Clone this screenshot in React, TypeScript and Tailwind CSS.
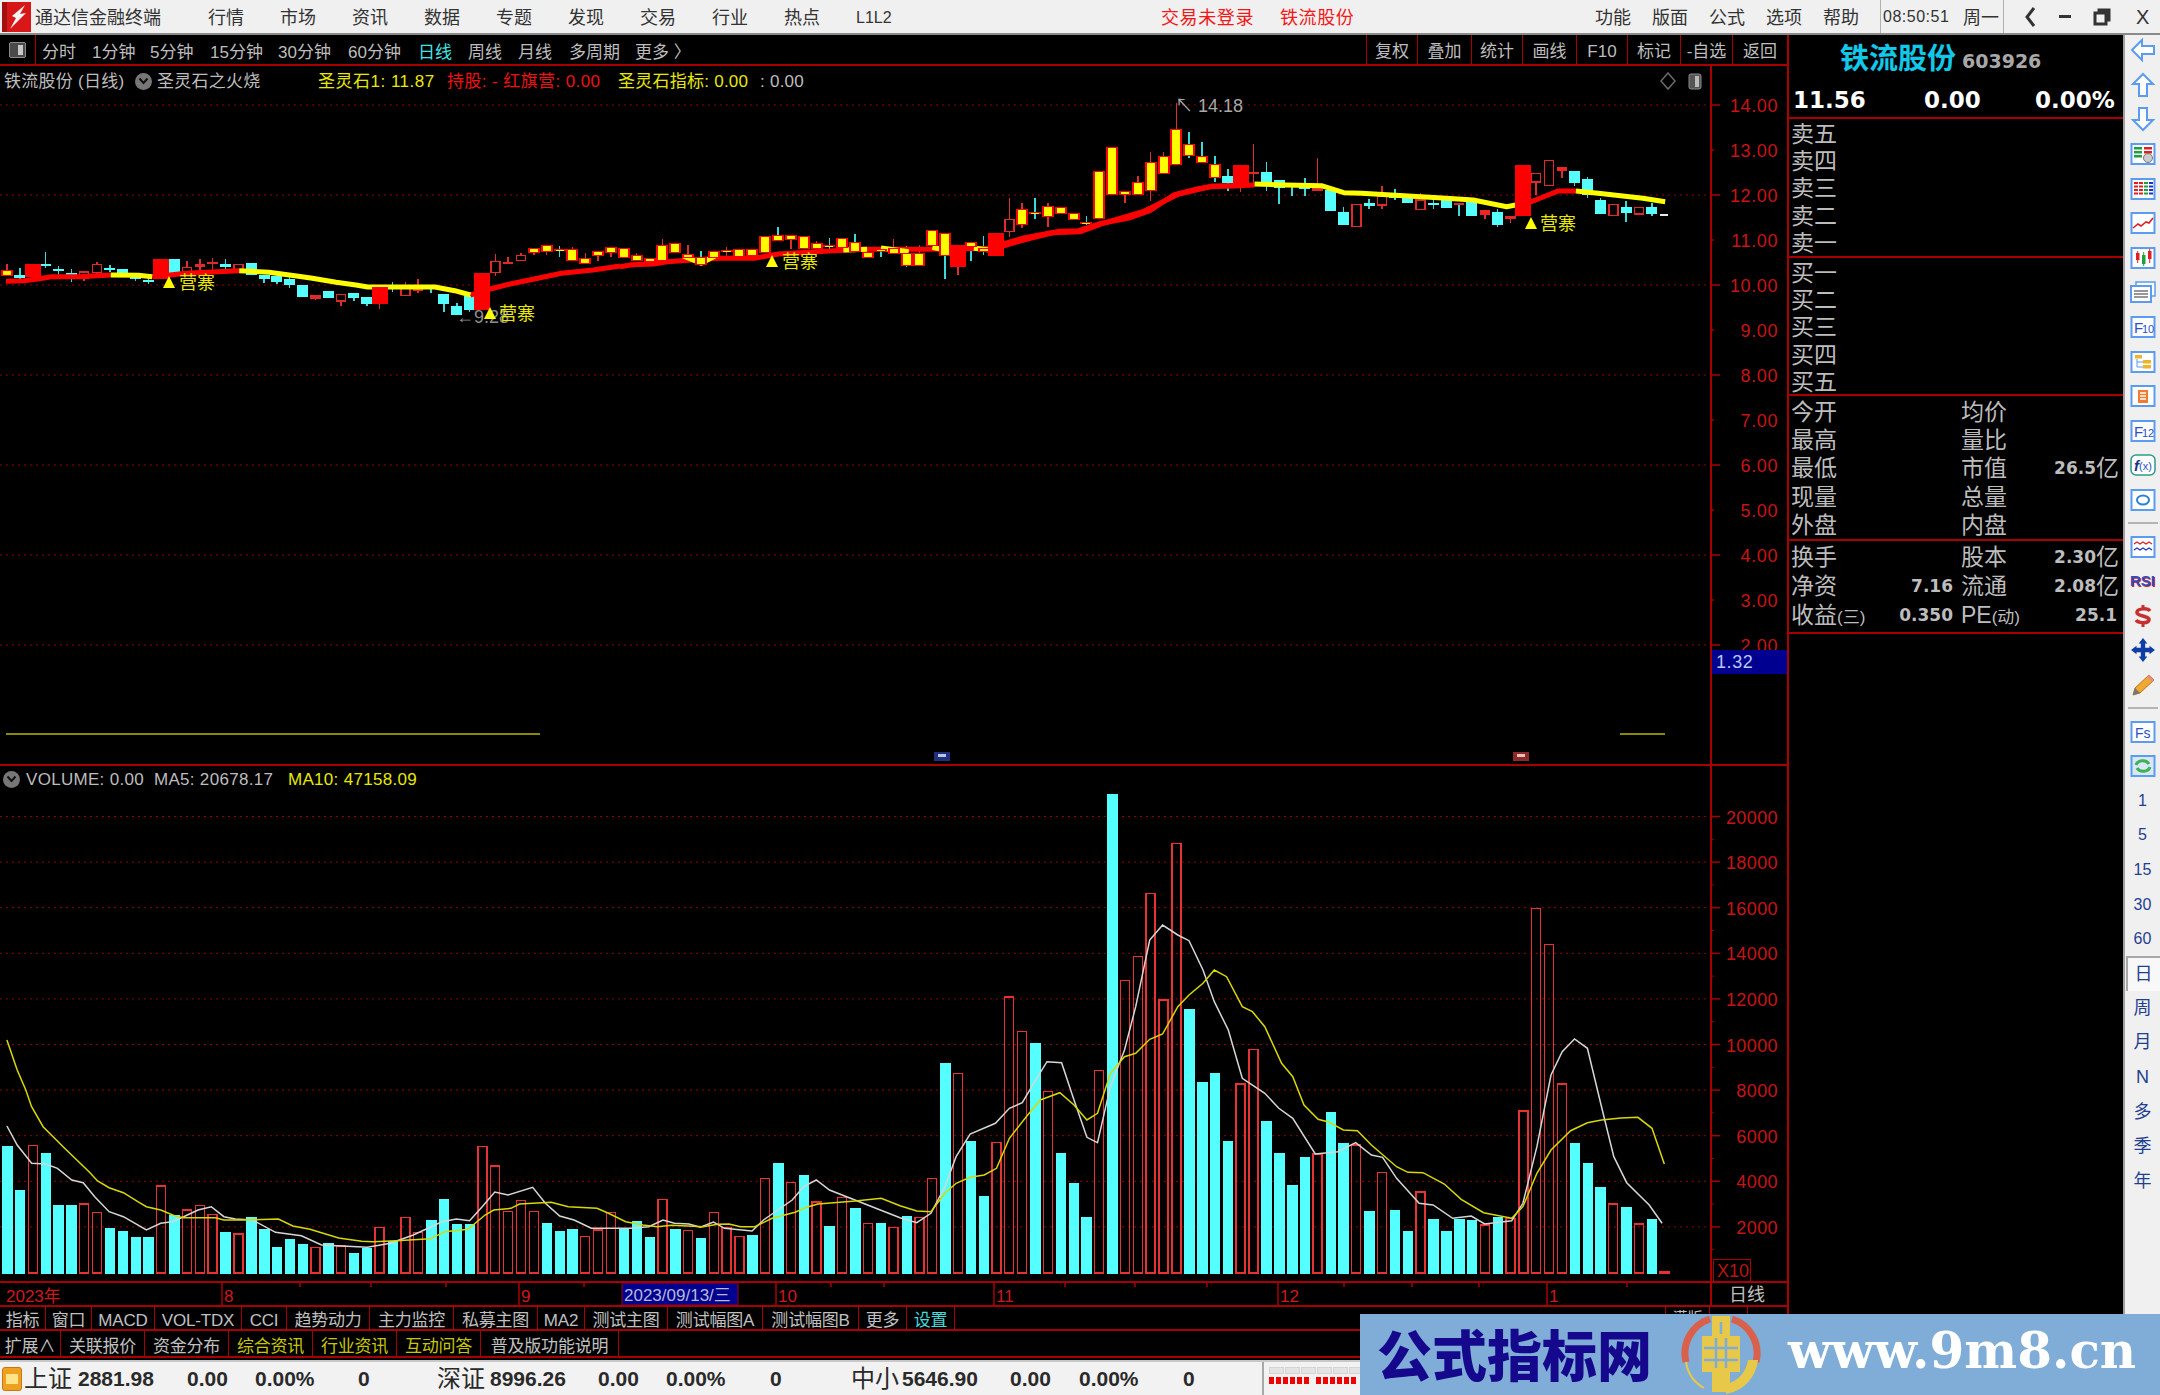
import type { ReactNode } from "react";

const RED = "#a80000";
const CY = "#55ffff";

// candle rows traced off the reference: [type, top, bottom, wickTop, wickBottom]
// types: c cyan, r hollow red, R solid red, Y yellow on red, Yc/rc same with a cyan wick
type Row = [string, number, number, number?, number?];

const rows7: Row[] = [
  ["Y", 150, 168, 132, 168], ["c", 165, 173, 145, 178], ["R", 132, 172], ["c", 133, 139, 97, 143],
  ["c", 147, 153, 137, 165], ["c", 160, 163, 147, 186], ["r", 156, 176, 156, 182], ["r", 133, 158, 127, 170],
  ["c", 143, 146, 136, 155], ["c", 147, 172], ["c", 165, 176, 165, 182], ["c", 180, 184, 172, 193],
  ["R", 118, 177], ["c", 118, 160], ["r", 143, 160, 124, 160], ["r", 133, 140, 118, 150],
  ["r", 127, 130, 114, 150], ["c", 133, 140, 118, 148], ["r", 133, 148], ["c", 128, 166],
  ["c", 164, 177, 164, 190], ["c", 168, 186, 168, 192], ["c", 178, 195, 172, 203], ["c", 196, 231],
  ["r", 228, 234, 228, 240], ["c", 214, 235], ["r", 224, 243, 224, 258], ["c", 218, 234, 218, 244],
  ["c", 232, 252, 232, 258], ["R", 201, 252, 201, 266], ["c", 198, 202, 187, 217], ["r", 206, 226, 187, 226],
  ["r", 207, 212, 178, 220], ["c", 198, 203, 198, 218], ["c", 222, 253, 222, 275], ["c", 259, 285, 250, 285],
  ["c", 228, 270, 228, 275], ["R", 160, 270], ["r", 124, 158, 101, 167], ["r", 128, 131, 110, 131],
  ["r", 106, 121, 100, 121], ["Y", 83, 100, 83, 105], ["Y", 75, 95, 75, 105], ["Yc", 88, 94, 78, 110],
  ["Y", 88, 122, 82, 122], ["Y", 115, 132, 100, 132], ["Y", 93, 109, 93, 122], ["Y", 80, 100, 80, 112],
];

const rows8: Row[] = [
  ["Y", 234, 265], ["Y", 256, 274, 250, 274], ["Y", 265, 277], ["Y", 225, 272, 207, 272],
  ["Y", 220, 250], ["Y", 252, 264, 224, 264], ["Yc", 262, 285, 242, 285], ["Y", 243, 264],
  ["Y", 240, 246, 232, 262], ["Y", 238, 260], ["Y", 238, 258], ["Y", 198, 250],
  ["Yc", 194, 214, 170, 214], ["Y", 194, 210, 194, 237], ["Y", 198, 238], ["Y", 220, 238, 212, 238],
  ["Yc", 225, 232, 203, 240], ["Y", 203, 233], ["Yc", 215, 245, 193, 245], ["Y", 245, 263],
  ["Yc", 236, 243, 236, 260], ["Y", 235, 253, 207, 253], ["Yc", 250, 287, 228, 290], ["Y", 250, 287, 225, 287],
  ["Y", 180, 228], ["Yc", 188, 258, 188, 327], ["R", 224, 290, 224, 315], ["Yc", 216, 230, 216, 272],
  ["Yc", 235, 245, 197, 255], ["R", 188, 259],
];

const rows9: Row[] = [
  ["r", 389, 425, 325, 440], ["Y", 356, 405, 340, 415], ["Yc", 365, 369, 325, 388], ["Y", 347, 382, 338, 410],
  ["Y", 351, 372], ["Y", 370, 391], ["Yc", 397, 400, 378, 405], ["Y", 243, 387],
  ["Y", 172, 316], ["Y", 302, 315, 302, 340], ["Y", 275, 315, 258, 315], ["Y", 217, 302, 185, 332],
  ["Y", 198, 252, 185, 252], ["Y", 117, 225, 40, 225], ["Yc", 162, 198, 127, 205], ["Yc", 198, 220, 157, 220],
  ["Yc", 222, 265, 197, 275], ["c", 257, 280, 238, 302], ["R", 226, 286, 226, 305], ["r", 247, 250, 163, 285],
  ["c", 247, 275, 217, 302], ["c", 270, 295, 270, 342], ["c", 280, 290, 280, 318], ["c", 288, 296, 265, 318],
  ["r", 294, 300, 203, 300], ["c", 300, 364], ["c", 365, 405, 350, 405], ["r", 343, 410],
  ["c", 338, 348, 328, 358], ["r", 320, 345, 288, 358], ["c", 312, 325, 297, 330], ["c", 320, 338],
  ["r", 330, 358, 308, 358], ["c", 338, 343, 318, 358], ["c", 330, 355], ["rc", 340, 344, 340, 378],
  ["c", 328, 378], ["r", 362, 372, 362, 388], ["c", 365, 405, 357, 410], ["r", 380, 385, 380, 400],
  ["R", 226, 378], ["r", 250, 276, 250, 315], ["r", 212, 287], ["r", 232, 242, 232, 265],
  ["c", 244, 278, 244, 288], ["c", 267, 315, 262, 325], ["c", 330, 373, 325, 373], ["r", 344, 377],
  ["c", 352, 368, 334, 395], ["r", 353, 372], ["c", 352, 373, 340, 378],
];

type Candle = { i: number; t: string; a: number; b: number; w1: number; w2: number };
const toCandles = (list: Row[], start: number, base: number): Candle[] =>
  list.map(([t, a, b, w1, w2], n) => ({
    i: start + n,
    t,
    a: base + a / 3,
    b: base + b / 3,
    w1: base + (w1 ?? a) / 3,
    w2: base + (w2 ?? b) / 3,
  }));

const candles = [...toCandles(rows7, 0, 220), ...toCandles(rows8, 48, 170), ...toCandles(rows9, 78, 90)];
const barX = (i: number) => 7 + 12.85 * i;

// thick signal line, [x, y] in 3x zoom units of each crop
const pts = (p: number[][], ox: number, sx: number, oy: number) =>
  p.map(([x, y]) => `${(ox + x / sx).toFixed(1)},${(oy + y / 3).toFixed(1)}`).join(" ");

const redLines = [
  pts([[15, 184], [60, 182], [100, 176], [130, 170], [200, 170], [280, 165]], 0, 2.529, 220),
  pts([[385, 170], [430, 165], [470, 160], [550, 155], [605, 152]], 0, 2.529, 220),
  pts([[1190, 225], [1240, 207], [1290, 192], [1360, 175], [1420, 160], [1500, 150], [1568, 138]], 0, 2.529, 220),
  pts([[0, 290], [30, 284], [85, 282], [120, 275], [155, 272], [250, 265], [340, 265], [400, 252], [540, 242], [620, 238], [770, 238], [950, 235], [985, 222], [1040, 204], [1110, 184], [1160, 182], [1210, 162], [1290, 143], [1340, 122], [1400, 75], [1460, 57], [1500, 48], [1568, 47]], 620, 2.529, 170),
  pts([[0, 465], [50, 445], [115, 428], [180, 425], [230, 400], [320, 365], [400, 312], [470, 290], [570, 285]], 1000, 2.24, 90),
  pts([[1155, 345], [1190, 335], [1250, 303], [1290, 303]], 1000, 2.24, 90),
];

const yellowLines = [
  pts([[280, 165], [350, 166], [385, 170]], 0, 2.529, 220),
  pts([[605, 152], [680, 157], [750, 168], [790, 175], [850, 187], [900, 195], [930, 201], [1100, 201], [1150, 212], [1190, 225]], 0, 2.529, 220),
  pts([[160, 258], [205, 280], [240, 258]], 620, 2.529, 170),
  pts([[565, 240], [625, 238]], 620, 2.529, 170),
  pts([[660, 234], [730, 245]], 620, 2.529, 170),
  pts([[790, 232], [830, 242]], 620, 2.529, 170),
  pts([[895, 235], [935, 240]], 620, 2.529, 170),
  pts([[570, 282], [640, 285], [720, 287], [770, 308], [810, 310], [1000, 325], [1060, 330], [1135, 350], [1155, 345]], 1000, 2.24, 90),
  pts([[1290, 303], [1340, 310], [1440, 325], [1490, 335]], 1000, 2.24, 90),
];

// volume bars, tops in 3x crop units
const vol10: [string, number][] = [
  ["c", 438], ["c", 570], ["r", 436], ["c", 458], ["c", 615], ["c", 615], ["r", 612], ["r", 638], ["c", 683], ["c", 692],
  ["c", 710], ["c", 710], ["r", 558], ["c", 645], ["r", 630], ["r", 617], ["r", 643], ["c", 696], ["r", 702], ["c", 652],
  ["c", 688], ["c", 741], ["c", 718], ["c", 732], ["r", 742], ["c", 728], ["r", 738], ["c", 759], ["c", 744], ["r", 683],
  ["c", 723], ["r", 652], ["r", 697], ["c", 660], ["c", 597], ["c", 673], ["c", 673], ["r", 440], ["r", 498], ["r", 634],
  ["r", 602], ["r", 634], ["c", 669], ["c", 692], ["c", 687], ["r", 710], ["r", 690], ["r", 638], ["c", 683], ["c", 664],
  ["c", 710], ["r", 598], ["c", 687], ["r", 692], ["c", 714], ["r", 638], ["r", 683], ["r", 710], ["c", 705], ["r", 535],
  ["c", 489], ["r", 548], ["c", 525], ["r", 606], ["c", 678], ["r", 592], ["c", 624], ["r", 670], ["c", 669], ["r", 683],
];
const vol11: [string, number][] = [
  ["c", 1307], ["r", 1313], ["r", 1196], ["c", 848], ["r", 881], ["c", 1082], ["c", 1248], ["r", 1087], ["r", 651], ["r", 755],
  ["c", 790], ["r", 934], ["c", 1118], ["c", 1208], ["c", 1311], ["r", 871], ["c", 41], ["r", 601], ["r", 529], ["r", 340],
  ["r", 660], ["r", 191], ["c", 686], ["c", 906], ["c", 879], ["c", 1082], ["r", 912], ["r", 808], ["c", 1023], ["c", 1118],
  ["c", 1216], ["c", 1131], ["r", 1122], ["c", 996], ["c", 1090], ["r", 1095], ["c", 1294], ["r", 1178], ["c", 1289], ["c", 1352],
  ["r", 1236], ["c", 1316], ["c", 1352], ["c", 1316], ["c", 1320], ["r", 1335], ["c", 1312], ["r", 1316], ["r", 993], ["r", 385],
  ["r", 493], ["r", 912], ["c", 1090], ["c", 1150], ["c", 1222], ["r", 1272], ["c", 1280], ["r", 1332], ["c", 1316], ["r", 1476],
];
const volBars = [
  ...vol10.map(([t, y], i) => ({ i, t, y: 1000 + y / 3 })),
  ...vol11.map(([t, y], n) => ({ i: 70 + n, t, y: 780 + y / 3 })),
];

const whiteLine =
  pts([[12, 378], [30, 435], [55, 490], [80, 492], [100, 505], [125, 540], [145, 548], [165, 590], [190, 635], [215, 650], [255, 690], [280, 670], [300, 665], [320, 650], [345, 630], [368, 620], [390, 650], [410, 657], [440, 660], [480, 697], [525, 707], [560, 735], [640, 742], [680, 730], [720, 705], [770, 665], [795, 657], [818, 662], [840, 620], [862, 576], [885, 585], [928, 562], [950, 610], [975, 648], [1000, 660], [1030, 685], [1100, 685], [1130, 680], [1155, 660], [1175, 670], [1200, 672], [1220, 682], [1243, 666], [1262, 685], [1310, 693], [1330, 660], [1380, 600], [1400, 560], [1422, 540], [1445, 570]], 0, 1.742, 1000) +
  " " +
  pts([[0, 1313], [30, 1328], [55, 1300], [80, 1220], [100, 1130], [125, 1062], [170, 1030], [195, 985], [218, 968], [240, 905], [262, 845], [288, 848], [310, 960], [333, 1072], [352, 1088], [375, 920], [400, 810], [420, 680], [445, 480], [468, 435], [495, 465], [515, 482], [540, 570], [560, 665], [585, 750], [610, 895], [650, 940], [675, 985], [700, 1015], [740, 1122], [780, 1115], [812, 1088], [840, 1125], [860, 1132], [885, 1195], [925, 1270], [950, 1275], [985, 1315], [1018, 1308], [1042, 1332], [1090, 1322], [1110, 1270], [1135, 1100], [1160, 885], [1180, 815], [1202, 777], [1225, 805], [1250, 980], [1272, 1130], [1295, 1208], [1335, 1275], [1358, 1330]], 900, 1.782, 780);

const yellowVol =
  pts([[12, 120], [30, 210], [45, 270], [55, 320], [75, 380], [110, 440], [155, 515], [170, 543], [190, 563], [215, 578], [240, 605], [255, 620], [280, 630], [305, 648], [320, 653], [375, 653], [390, 660], [420, 660], [485, 657], [510, 678], [540, 688], [590, 714], [630, 724], [650, 725], [690, 722], [750, 716], [775, 695], [815, 688], [845, 645], [860, 630], [890, 625], [905, 612], [960, 607], [990, 620], [1040, 625], [1060, 640], [1090, 665], [1120, 675], [1145, 680], [1170, 676], [1225, 680], [1250, 673], [1270, 672], [1290, 680], [1315, 680], [1345, 655], [1385, 637], [1405, 622], [1425, 612], [1490, 603], [1535, 595]], 0, 1.742, 1000) +
  " " +
  pts([[0, 1277], [30, 1293], [55, 1295], [80, 1240], [100, 1210], [125, 1192], [150, 1185], [172, 1165], [195, 1075], [225, 1010], [250, 960], [285, 938], [310, 975], [333, 1020], [352, 1000], [375, 880], [400, 830], [420, 820], [445, 778], [468, 762], [495, 680], [515, 645], [540, 610], [560, 570], [582, 590], [610, 680], [628, 695], [650, 740], [680, 850], [700, 890], [720, 975], [745, 1018], [765, 1027], [790, 1050], [815, 1052], [840, 1095], [885, 1160], [905, 1177], [932, 1178], [970, 1212], [1000, 1258], [1040, 1298], [1090, 1315], [1110, 1280], [1135, 1180], [1160, 1110], [1195, 1052], [1225, 1028], [1250, 1020], [1285, 1014], [1315, 1012], [1340, 1045], [1362, 1152]], 900, 1.782, 780);

const PriceChart = () => {
  const y = (p: number) => 105 + (14 - p) * 45;
  const prices = [14, 13, 12, 11, 10, 9, 8, 7, 6, 5, 4, 3, 2];
  const marks: [number, number, number][] = [
    [169, 283, 179],
    [490, 314, 499],
    [772, 262, 782],
    [1531, 224, 1540],
  ];
  const low = candles.filter((c) => !c.t.startsWith("Y") && c.t !== "R");
  const high = candles.filter((c) => c.t.startsWith("Y") || c.t === "R");
  return (
    <svg width={1787} height={698} viewBox="0 66 1787 698" className="block">
      {prices.map((p) => (
        <g key={p}>
          {p % 2 === 0 && <line x1={0} x2={1710} y1={y(p)} y2={y(p)} stroke="#900000" strokeDasharray="2 4" />}
          <line x1={1710} x2={p % 2 === 0 ? 1720 : 1714} y1={y(p)} y2={y(p)} stroke={RED} strokeWidth={1.5} />
          <text x={1778} y={y(p) + 7} textAnchor="end" fontSize={18} letterSpacing={0.6} fill="#c81414">
            {p.toFixed(2)}
          </text>
        </g>
      ))}
      <line x1={1711} x2={1711} y1={66} y2={764} stroke={RED} strokeWidth={2} />
      <rect x={1712} y={650} width={75} height={24} fill="#000090" />
      <text x={1716} y={668} fontSize={18} letterSpacing={0.6} fill="#b9c8f5">1.32</text>

      <polygon points="1668,73 1675,81 1668,89 1661,81" fill="none" stroke="#6a6a6a" strokeWidth={1.5} />
      <rect x={1689} y={74} width={12} height={15} rx={2} fill="#555" stroke="#8a8a8a" />
      <rect x={1695} y={76} width={4} height={11} fill="#bbb" />

      {/* wicks and plain bodies go under the signal line */}
      <g shapeRendering="crispEdges">
        {candles.map((c) => (
          <line
            key={c.i}
            x1={barX(c.i)}
            x2={barX(c.i)}
            y1={c.w1}
            y2={c.w2}
            stroke={c.t === "c" || c.t === "Yc" || c.t === "rc" ? "#3fd8d8" : "#d83030"}
            strokeWidth={1.5}
          />
        ))}
        {low.map((c) =>
          c.t === "c" ? (
            <rect key={c.i} x={barX(c.i) - 5.5} y={c.a} width={11} height={Math.max(c.b - c.a, 2)} fill={CY} />
          ) : (
            <rect
              key={c.i}
              x={barX(c.i) - 4.5}
              y={c.a}
              width={9}
              height={c.b - c.a}
              fill={c.b - c.a < 4 ? "#ff2020" : "#000"}
              stroke="#e02a2a"
              strokeWidth={1.5}
            />
          ),
        )}
      </g>
      {redLines.map((p, n) => (
        <polyline key={n} points={p} fill="none" stroke="#ff0000" strokeWidth={5} strokeLinejoin="round" />
      ))}
      {yellowLines.map((p, n) => (
        <polyline key={n} points={p} fill="none" stroke="#ffff00" strokeWidth={5} strokeLinejoin="round" />
      ))}
      <g shapeRendering="crispEdges">
        {high.map((c) =>
          c.t === "R" ? (
            <rect key={c.i} x={barX(c.i) - 8} y={c.a} width={16} height={c.b - c.a} fill="#ff0000" />
          ) : (
            <g key={c.i}>
              <rect x={barX(c.i) - 6} y={c.a} width={12} height={Math.max(c.b - c.a, 2)} fill="#ff0000" />
              <rect x={barX(c.i) - 4} y={c.a + 1} width={8} height={Math.max(c.b - c.a - 2, 1)} fill="#ffff00" />
            </g>
          ),
        )}
      </g>
      <rect x={1660} y={214} width={8} height={2} fill="#e8e8e8" />

      <text x={456} y={323} fontSize={18} fill="#8f8f8f">←9.28</text>
      <text x={1175} y={112} fontSize={18} fill="#a8a8a8">↖</text>
      <text x={1198} y={112} fontSize={18} fill="#a8a8a8">14.18</text>
      {marks.map(([tx, ty, lx]) => (
        <g key={tx}>
          <polygon points={`${tx},${ty - 7} ${tx + 6},${ty + 5} ${tx - 6},${ty + 5}`} fill="#ffff00" />
          <text x={lx} y={ty + 6} fontSize={18} fill="#e8e800">营寨</text>
        </g>
      ))}

      <line x1={6} x2={540} y1={734} y2={734} stroke="#b8b800" strokeWidth={1.5} />
      <line x1={1620} x2={1665} y1={734} y2={734} stroke="#b8b800" strokeWidth={1.5} />
      <rect x={934} y={752} width={16} height={9} fill="#20307c" />
      <rect x={938} y={754} width={8} height={3} fill="#b8c4e0" />
      <rect x={1513} y={752} width={16} height={9} fill="#8c2a2a" />
      <rect x={1517} y={754} width={8} height={3} fill="#e8c0c0" />
    </svg>
  );
};

const VolumeChart = () => {
  const y = (v: number) => 1272.5 - (v / 2000) * 45.6;
  const levels = [2000, 4000, 6000, 8000, 10000, 12000, 14000, 16000, 18000, 20000];
  return (
    <svg width={1787} height={515} viewBox="0 766 1787 515" className="block">
      {levels.map((v) => (
        <g key={v}>
          <line x1={0} x2={1710} y1={y(v)} y2={y(v)} stroke="#900000" strokeDasharray="2 4" />
          <line x1={1710} x2={1720} y1={y(v)} y2={y(v)} stroke={RED} strokeWidth={1.5} />
          <line x1={1710} x2={1714} y1={y(v - 1000)} y2={y(v - 1000)} stroke={RED} />
          <text x={1778} y={y(v) + 7} textAnchor="end" fontSize={18} letterSpacing={0.4} fill="#c81414">
            {v}
          </text>
        </g>
      ))}
      <line x1={1711} x2={1711} y1={766} y2={1281} stroke={RED} strokeWidth={2} />
      <rect x={1713.5} y={1259.5} width={37} height={22} fill="none" stroke={RED} />
      <text x={1717} y={1277} fontSize={18} fill="#b81414">X10</text>
      <g shapeRendering="crispEdges">
        {volBars.map((b) =>
          b.t === "c" ? (
            <rect key={b.i} x={barX(b.i) - 5} y={b.y} width={10.5} height={1273.5 - b.y} fill={CY} />
          ) : (
            <rect key={b.i} x={barX(b.i) - 4.5} y={b.y} width={9} height={1273 - b.y} fill="none" stroke="#e63232" strokeWidth={1.4} />
          ),
        )}
      </g>
      <polyline points={whiteLine} fill="none" stroke="#d6d6d6" strokeWidth={1.5} />
      <polyline points={yellowVol} fill="none" stroke="#d8d800" strokeWidth={1.5} />
    </svg>
  );
};

const DateAxis = () => {
  const seps: [number, string][] = [[222, "8"], [519, "9"], [776, "10"], [994, "11"], [1278, "12"], [1547, "1"]];
  const ticks = [300, 371, 446, 584, 831, 884, 1065, 1135, 1207, 1344, 1412, 1479, 1627];
  return (
    <svg width={1787} height={22} viewBox="0 1283 1787 22" className="block">
      <text x={6} y={1302} fontSize={17} fill="#d01818">2023年</text>
      {seps.map(([x, t]) => (
        <g key={x}>
          <line x1={x} x2={x} y1={1283} y2={1305} stroke={RED} strokeWidth={1.5} />
          <text x={x + 2} y={1302} fontSize={17} fill="#d01818">{t}</text>
        </g>
      ))}
      {ticks.map((x) => (
        <line key={x} x1={x} x2={x} y1={1283} y2={1287} stroke={RED} strokeWidth={1.5} />
      ))}
      <rect x={622} y={1283} width={116} height={22} fill="#000090" stroke={RED} />
      <text x={624} y={1301} fontSize={17} fill="#b8b8d8">2023/09/13/三</text>
      <line x1={1711} x2={1711} y1={1283} y2={1305} stroke={RED} strokeWidth={2} />
      <text x={1729} y={1301} fontSize={18} fill="#c0c0c0">日线</text>
    </svg>
  );
};

const tabs1 = [
  { label: "指标", w: "w-[46px] text-[#c0c0c0]" },
  { label: "窗口", w: "w-[46px] text-[#c0c0c0]" },
  { label: "MACD", w: "w-[63px] text-[#c0c0c0]" },
  { label: "VOL-TDX", w: "w-[87px] text-[#c0c0c0]" },
  { label: "CCI", w: "w-[45px] text-[#c0c0c0]" },
  { label: "趋势动力", w: "w-[83px] text-[#c0c0c0]" },
  { label: "主力监控", w: "w-[84px] text-[#c0c0c0]" },
  { label: "私募主图", w: "w-[84px] text-[#c0c0c0]" },
  { label: "MA2", w: "w-[47px] text-[#c0c0c0]" },
  { label: "测试主图", w: "w-[83px] text-[#c0c0c0]" },
  { label: "测试幅图A", w: "w-[95px] text-[#c0c0c0]" },
  { label: "测试幅图B", w: "w-[96px] text-[#c0c0c0]" },
  { label: "更多", w: "w-[48px] text-[#c0c0c0]" },
  { label: "设置", w: "w-[48px] text-[#44dcdc]" },
];

const tabs2 = [
  { label: "扩展∧", w: "w-[61px] text-[#c0c0c0]" },
  { label: "关联报价", w: "w-[84px] text-[#c0c0c0]" },
  { label: "资金分布", w: "w-[84px] text-[#c0c0c0]" },
  { label: "综合资讯", w: "w-[84px] text-[#c8c800]" },
  { label: "行业资讯", w: "w-[84px] text-[#c8c800]" },
  { label: "互动问答", w: "w-[84px] text-[#c8c800]" },
  { label: "普及版功能说明", w: "w-[138px] text-[#c0c0c0]" },
];

const TabCell = ({ label, w }: { label: string; w: string }) => (
  <div className={`${w} flex items-center justify-center pt-[5px] border-r border-[#a80000] whitespace-nowrap text-[17px] tracking-[-0.2px] leading-none`}>
    {label}
  </div>
);

const QuoteRow = ({ a, v, b, w }: { a: ReactNode; v?: string; b?: ReactNode; w?: ReactNode }) => (
  <div className="grid grid-cols-[90px_72px_82px_84px] h-[28px] items-center pl-[2px] text-[23px] leading-none text-[#bdbdbd]">
    <span className="whitespace-nowrap">{a}</span>
    <span className="text-right text-[17px] font-bold [font-family:'DejaVu_Sans',sans-serif]">{v}</span>
    <span className="pl-[8px] whitespace-nowrap">{b}</span>
    <span className="text-right">{w}</span>
  </div>
);

const Yi = ({ n }: { n: string }) => (
  <span className="flex items-center justify-end">
    <span className="text-[17px] font-bold [font-family:'DejaVu_Sans',sans-serif]">{n}</span>亿
  </span>
);

const QuotePanel = () => (
  <div className="w-[336px] border-l-2 border-[#a80000] bg-black">
    <div className="h-[48px] flex items-center pl-[51px] gap-[6px]">
      <span className="text-[29px] font-bold text-[#12c8e8] leading-none">铁流股份</span>
      <span className="mt-[4px] text-[19px] font-bold text-[#a8a8a8] [font-family:'DejaVu_Sans',sans-serif]">603926</span>
    </div>
    <div className="h-[36px] border-b-2 border-[#a80000] flex items-center text-[23px] font-bold text-white [font-family:'DejaVu_Sans',sans-serif] leading-none">
      <span className="w-[135px] pl-[4px]">11.56</span>
      <span className="w-[111px]">0.00</span>
      <span>0.00%</span>
    </div>
    <div className="h-[139px] border-b-2 border-[#a80000] pt-[2px] pl-[2px] text-[23px] leading-[27.2px] text-[#bdbdbd]">
      {["卖五", "卖四", "卖三", "卖二", "卖一"].map((t) => (
        <div key={t}>{t}</div>
      ))}
    </div>
    <div className="h-[138px] border-b-2 border-[#a80000] pt-[2px] pl-[2px] text-[23px] leading-[27.2px] text-[#bdbdbd]">
      {["买一", "买二", "买三", "买四", "买五"].map((t) => (
        <div key={t}>{t}</div>
      ))}
    </div>
    <div className="h-[145px] border-b-2 border-[#a80000] pt-[2px] [&>div]:h-[28.4px]">
      <QuoteRow a="今开" b="均价" />
      <QuoteRow a="最高" b="量比" />
      <QuoteRow a="最低" b="市值" w={<Yi n="26.5" />} />
      <QuoteRow a="现量" b="总量" />
      <QuoteRow a="外盘" b="内盘" />
    </div>
    <div className="h-[93px] border-b-2 border-[#a80000] pt-[2px] [&>div]:h-[29px]">
      <QuoteRow a="换手" b="股本" w={<Yi n="2.30" />} />
      <QuoteRow a="净资" v="7.16" b="流通" w={<Yi n="2.08" />} />
      <QuoteRow
        a={<>收益<span className="text-[17px]">(三)</span></>}
        v="0.350"
        b={<>PE<span className="text-[17px]">(动)</span></>}
        w={<span className="block pr-[2px] text-[17px] font-bold [font-family:'DejaVu_Sans',sans-serif]">25.1</span>}
      />
    </div>
  </div>
);

const Box = ({ children }: { children: ReactNode }) => (
  <svg width="26" height="24" viewBox="0 0 26 24">
    <rect x="1.5" y="2" width="23" height="20" fill="#fff" stroke="#5b9bf0" strokeWidth="2" />
    {children}
  </svg>
);

const Arrow = ({ rotate }: { rotate: number }) => (
  <svg width="26" height="26" viewBox="0 0 26 26">
    <polygon
      points="2,13 12,3 12,9 24,9 24,17 12,17 12,23"
      fill="#fff"
      stroke="#5b9bf0"
      strokeWidth="2"
      transform={`rotate(${rotate} 13 13)`}
    />
  </svg>
);

const sideTop: ReactNode[] = [
  <Arrow rotate={0} />,
  <Arrow rotate={90} />,
  <Arrow rotate={-90} />,
  <Box>
    <rect x="4" y="5" width="8" height="2.5" fill="#1fa03c" />
    <rect x="14" y="5" width="8" height="2.5" fill="#e02020" />
    <rect x="4" y="9" width="8" height="2.5" fill="#1fa03c" />
    <rect x="14" y="9" width="8" height="2.5" fill="#e02020" />
    <rect x="4" y="13" width="8" height="2.5" fill="#1fa03c" />
    <circle cx="18" cy="16" r="4.5" fill="#ccc" stroke="#777" />
  </Box>,
  <Box>
    {[5, 10, 15, 20].map((x, n) => (
      <g key={x} fill={["#e02020", "#e02020", "#1fa03c", "#2030d0"][n]}>
        <rect x={x - 1} y="5" width="4" height="2" />
        <rect x={x - 1} y="8.5" width="4" height="2" />
        <rect x={x - 1} y="12" width="4" height="2" />
        <rect x={x - 1} y="15.5" width="4" height="2" />
      </g>
    ))}
  </Box>,
  <Box>
    <polyline points="3,17 8,13 11,15 16,11 19,12 23,7" fill="none" stroke="#e02020" strokeWidth="1.6" />
  </Box>,
  <Box>
    <rect x="6" y="7" width="3.5" height="7" fill="#e02020" />
    <line x1="7.7" x2="7.7" y1="5" y2="17" stroke="#e02020" />
    <rect x="12" y="9" width="3.5" height="9" fill="#1fa03c" />
    <line x1="13.7" x2="13.7" y1="6" y2="20" stroke="#1fa03c" />
    <rect x="18" y="5" width="3.5" height="8" fill="#e02020" />
    <line x1="19.7" x2="19.7" y1="3" y2="17" stroke="#e02020" />
  </Box>,
  <svg width="26" height="24" viewBox="0 0 26 24">
    <rect x="6" y="2" width="19" height="14" fill="#fff" stroke="#5b9bf0" strokeWidth="1.5" />
    <rect x="1" y="6" width="20" height="16" fill="#fff" stroke="#5b9bf0" strokeWidth="2" />
    <path d="M4 11h14M4 14h14M4 17h14" stroke="#777" strokeWidth="1.4" />
  </svg>,
  <Box>
    <text x="4" y="18" fontSize="15" fill="#2b50c8">F</text>
    <text x="12" y="18" fontSize="11" fill="#2b50c8">10</text>
  </Box>,
  <Box>
    <rect x="5" y="5" width="7" height="3.5" fill="#f0b428" />
    <rect x="13" y="10" width="8" height="3.5" fill="#f0b428" />
    <rect x="13" y="15" width="8" height="3.5" fill="#f0b428" />
    <path d="M7 9v8h6M7 12h6" stroke="#5b9bf0" fill="none" />
  </Box>,
  <Box>
    <rect x="8" y="6" width="10" height="13" fill="#f47a30" />
    <path d="M10 9h6M10 12h6M10 15h6" stroke="#fff" strokeWidth="1.5" />
  </Box>,
  <Box>
    <text x="4" y="18" fontSize="15" fill="#2b50c8">F</text>
    <text x="12" y="18" fontSize="11" fill="#2b50c8">12</text>
  </Box>,
  <svg width="26" height="24" viewBox="0 0 26 24">
    <rect x="1" y="2" width="24" height="20" rx="5" fill="#fff" stroke="#2e9a8c" strokeWidth="1.5" />
    <text x="4" y="18" fontSize="15" fontStyle="italic" fontWeight="bold" fill="#20308c">f</text>
    <text x="9" y="17" fontSize="11" fill="#2b50c8">(x)</text>
  </svg>,
  <Box>
    <ellipse cx="13" cy="12" rx="6" ry="4.5" fill="none" stroke="#2b80d8" strokeWidth="2" />
  </Box>,
];

const sideMid: ReactNode[] = [
  <Box>
    <path d="M4 9l3-2 3 2 3-2 3 2 3-2 3 2" fill="none" stroke="#e02020" strokeWidth="1.2" />
    <path d="M4 15l3-2 3 2 3-2 3 2 3-2 3 2" fill="none" stroke="#2030d0" strokeWidth="1.2" />
  </Box>,
  <span className="text-[15px] font-bold text-[#3a48b8] [font-family:'Liberation_Sans',sans-serif] [text-shadow:1px_1px_0_#c03030]">RSI</span>,
  <svg width="22" height="26" viewBox="0 0 22 26">
    <path d="M11 2v4M11 20v4" stroke="#c83030" strokeWidth="3" />
    <path d="M18 8c-2-3-12-3-13 1s13 4 12 8-11 3-13 0" fill="none" stroke="#c83030" strokeWidth="3.5" />
  </svg>,
  <svg width="26" height="26" viewBox="0 0 24 24" fill="#0d3ea8">
    <polygon points="12,1 16,6 14,6 14,10 18,10 18,8 23,12 18,16 18,14 14,14 14,18 16,18 12,23 8,18 10,18 10,14 6,14 6,16 1,12 6,8 6,10 10,10 10,6 8,6" />
  </svg>,
  <svg width="26" height="26" viewBox="0 0 26 26">
    <polygon points="3,23 5,16 19,3 24,8 10,21" fill="#f0a830" stroke="#b87818" />
    <polygon points="19,3 24,8 22,10 17,5" fill="#e88a8a" />
    <polygon points="3,23 5,16 10,21" fill="#777" />
  </svg>,
];

const Sep = () => (
  <div className="h-[12px] flex items-center justify-center">
    <div className="w-[30px] h-[2px] bg-[#b4b4b4]" />
  </div>
);

const SideBar = () => (
  <div className="w-[37px] bg-[#f0f0f0] border-l-2 border-[#a0a0a0]">
    <div className="-mt-[2px] flex flex-col items-center text-[#1f3f8f] text-[15px]">
      {sideTop.map((n, k) => (
        <div key={k} className="h-[34.6px] flex items-center justify-center">{n}</div>
      ))}
      <Sep />
      {sideMid.map((n, k) => (
        <div key={k} className="h-[34.6px] flex items-center justify-center">{n}</div>
      ))}
      <Sep />
      <div className="h-[34.6px] flex items-center justify-center">
        <svg width="26" height="24" viewBox="0 0 26 24">
          <rect x="1.5" y="2" width="23" height="20" fill="#fff" stroke="#5b9bf0" strokeWidth="2" />
          <text x="5" y="18" fontSize="14" fill="#2b50c8">Fs</text>
        </svg>
      </div>
      <div className="h-[34.6px] flex items-center justify-center">
        <svg width="26" height="24" viewBox="0 0 26 24">
          <rect x="1.5" y="2" width="23" height="20" fill="#d8e8f8" stroke="#5b9bf0" strokeWidth="2" />
          <path d="M6 11a7 6 0 0 1 13-1M20 13a7 6 0 0 1-13 1" fill="none" stroke="#40b050" strokeWidth="3" />
        </svg>
      </div>
      {["1", "5", "15", "30", "60"].map((t) => (
        <div key={t} className="h-[34.6px] flex items-center justify-center [font-family:'Liberation_Sans',sans-serif] text-[16px]">{t}</div>
      ))}
      <div className="h-[34.6px] w-[34px] flex items-center justify-center text-[18px] bg-[#f8f8f8] border-t-2 border-l-2 border-[#a8a8a8]">日</div>
      {["周", "月", "N", "多", "季", "年"].map((t) => (
        <div key={t} className="h-[34.6px] flex items-center justify-center text-[18px]">{t}</div>
      ))}
    </div>
  </div>
);

const TitleBar = () => (
  <div className="h-[35px] bg-[#f0f0f0] border-b-2 border-[#8a8a8a] flex items-center text-[18px] text-[#333] leading-none">
    <div className="w-[35px] pl-[2px]">
      <svg width="29" height="30" viewBox="0 0 29 30">
        <rect width="29" height="30" fill="#d81818" />
        <rect width="5" height="30" fill="#a01010" />
        <path d="M23 3 L10 14 L14 16 L8 27 L24 11 L18 12 Z" fill="#f4f4f4" />
      </svg>
    </div>
    <div className="w-[173px] pt-[2px] whitespace-nowrap">通达信金融终端</div>
    {["行情", "市场", "资讯", "数据", "专题", "发现", "交易", "行业", "热点"].map((t) => (
      <div key={t} className="w-[72px] pt-[2px]">{t}</div>
    ))}
    <div className="w-[72px] pt-[2px] text-[16px]">L1L2</div>
    <div className="w-[233px]" />
    <div className="w-[119px] pt-[2px] text-[#f01818] whitespace-nowrap tracking-[0.6px]">交易未登录</div>
    <div className="w-[315px] pt-[2px] text-[#f01818] whitespace-nowrap tracking-[0.6px]">铁流股份</div>
    {["功能", "版面", "公式", "选项", "帮助"].map((t) => (
      <div key={t} className="w-[57px] pt-[2px]">{t}</div>
    ))}
    <div className="h-full w-[83px] border-l border-[#b0b0b0] flex items-center pl-[2px] text-[16px] tracking-[0.5px]">08:50:51</div>
    <div className="w-[40px] pt-[2px]">周一</div>
    <div className="h-full w-[20px] border-l border-[#b0b0b0]" />
    <div className="w-[36px] text-[#333]">
      <svg width="14" height="22" viewBox="0 0 14 22"><path d="M11 2 L4 11 L11 20" fill="none" stroke="#333" strokeWidth="3" /></svg>
    </div>
    <div className="w-[34px]"><div className="w-[12px] h-[3px] bg-[#333]" /></div>
    <div className="w-[43px]">
      <svg width="18" height="18" viewBox="0 0 18 18"><path d="M6 5V2h10v10h-3M2 5h11v11H2z" fill="none" stroke="#333" strokeWidth="3" /></svg>
    </div>
    <div className="text-[20px] font-medium [font-family:'Liberation_Sans',sans-serif]">X</div>
  </div>
);

const Toolbar = () => {
  const left = [
    { t: "分时", w: "w-[50px]" },
    { t: "1分钟", w: "w-[58px]" },
    { t: "5分钟", w: "w-[60px]" },
    { t: "15分钟", w: "w-[68px]" },
    { t: "30分钟", w: "w-[70px]" },
    { t: "60分钟", w: "w-[70px]" },
    { t: "日线", w: "w-[50px] text-[#44e4e4]" },
    { t: "周线", w: "w-[50px]" },
    { t: "月线", w: "w-[51px]" },
    { t: "多周期", w: "w-[66px]" },
    { t: "更多 〉", w: "w-[70px]" },
  ];
  const right = [
    { t: "复权", w: "w-[51px]" },
    { t: "叠加", w: "w-[54px]" },
    { t: "统计", w: "w-[51px]" },
    { t: "画线", w: "w-[54px]" },
    { t: "F10", w: "w-[51px]" },
    { t: "标记", w: "w-[53px]" },
    { t: "-自选", w: "w-[52px]" },
    { t: "返回", w: "w-[55px]" },
  ];
  return (
    <div className="h-[31px] flex border-b-2 border-[#a80000] text-[17px] text-[#bdbdbd] leading-none">
      <div className="w-[36px] border-r border-[#a80000] flex items-center justify-center">
        <div className="w-[17px] h-[16px] rounded-[2px] border border-[#8a8a8a] bg-[#4a4a4a] flex justify-end pr-[2px] py-[2px]">
          <div className="w-[5px] bg-[#c8c8c8]" />
        </div>
      </div>
      <div className="flex items-center pl-[6px] pt-[5px] flex-1 whitespace-nowrap">
        {left.map((i) => (
          <div key={i.t} className={i.w}>{i.t}</div>
        ))}
      </div>
      {right.map((i) => (
        <div key={i.t} className={`${i.w} border-l border-[#a80000] pt-[3px] flex items-center justify-center whitespace-nowrap`}>{i.t}</div>
      ))}
    </div>
  );
};

const ChevronDot = () => (
  <span className="w-[17px] h-[17px] rounded-full bg-[#777] flex items-center justify-center">
    <svg width="11" height="8" viewBox="0 0 11 8"><path d="M1.5 1.5 L5.5 6 L9.5 1.5" fill="none" stroke="#111" strokeWidth="2" /></svg>
  </span>
);

const StatusItem = ({ w, children, cls = "" }: { w: string; children: ReactNode; cls?: string }) => (
  <div className={`${w} ${cls} whitespace-nowrap`}>{children}</div>
);

const StatusBar = () => (
  <div className="h-[35px] bg-[#f2f2f2] flex items-center text-[21px] font-bold text-[#2a2a2a] leading-none border-t-2 border-[#c8c8c8]">
    <div className="w-[24px] pl-[2px]">
      <div className="w-[20px] h-[24px] rounded-[3px] bg-[#f0a020] border border-[#c87810] flex items-center justify-center">
        <div className="w-[12px] h-[10px] bg-[#ffe48a]" />
      </div>
    </div>
    <StatusItem w="w-[54px]" cls="text-[24px] font-normal">上证</StatusItem>
    <StatusItem w="w-[109px]">2881.98</StatusItem>
    <StatusItem w="w-[68px]">0.00</StatusItem>
    <StatusItem w="w-[103px]">0.00%</StatusItem>
    <StatusItem w="w-[79px]">0</StatusItem>
    <StatusItem w="w-[53px]" cls="text-[24px] font-normal">深证</StatusItem>
    <StatusItem w="w-[108px]">8996.26</StatusItem>
    <StatusItem w="w-[68px]">0.00</StatusItem>
    <StatusItem w="w-[104px]">0.00%</StatusItem>
    <StatusItem w="w-[81px]">0</StatusItem>
    <StatusItem w="w-[51px]" cls="text-[24px] font-normal">中小</StatusItem>
    <StatusItem w="w-[108px]">5646.90</StatusItem>
    <StatusItem w="w-[69px]">0.00</StatusItem>
    <StatusItem w="w-[104px]">0.00%</StatusItem>
    <StatusItem w="w-[79px]">0</StatusItem>
    <div className="h-full border-l-2 border-[#a8a8a8] pl-[5px] pt-[5px] flex flex-col gap-[3px]">
      <div className="flex gap-[1px]">
        {Array.from({ length: 12 }).map((_, k) => (
          <div key={k} className="w-[15px] h-[7px] bg-[#e4e4e4] border border-[#d4d4d4]" />
        ))}
      </div>
      <div className="flex gap-[1px]">
        {Array.from({ length: 4 }).map((_, k) => (
          <div key={k} className="flex gap-[2px] mr-[6px]">
            {Array.from({ length: 6 }).map((__, j) => (
              <div key={j} className="w-[5px] h-[7px] bg-[#f00000]" />
            ))}
          </div>
        ))}
      </div>
    </div>
  </div>
);

const Watermark = () => (
  <div className="absolute left-[1360px] top-[1314px] w-[800px] h-[81px] bg-[#7fadd8] flex items-center">
    <div className="w-[320px] -mt-[4px] pl-[17px] text-[55px] leading-none font-black text-[#15088c] whitespace-nowrap [font-family:'Noto_Sans_CJK_SC',sans-serif]">
      公式指标网
    </div>
    <svg width="82" height="81" viewBox="0 0 82 81">
      <path d="M6 48 A36 36 0 0 1 30 5" fill="none" stroke="#d9604a" strokeWidth="7" />
      <path d="M52 5 A36 36 0 0 1 76 48" fill="none" stroke="#d9604a" strokeWidth="7" />
      <path d="M6 48 A36 36 0 0 0 24 74" fill="none" stroke="#e8c848" strokeWidth="2" />
      <path d="M78 46 A38 38 0 0 1 46 80 L46 70 A28 28 0 0 0 68 46 Z" fill="#e8c848" />
      <rect x="22" y="22" width="38" height="36" fill="#e8c848" />
      <rect x="32" y="2" width="18" height="76" fill="#e8c848" />
      <path d="M24 34h34M24 46h34M41 8v12M36 24v30M46 24v30" stroke="#7fadd8" strokeWidth="2.5" fill="none" />
    </svg>
    <div className="ml-[26px] -mt-[8px] text-[50px] leading-none font-bold text-white whitespace-nowrap [font-family:'DejaVu_Serif',serif]">
      www.9m8.cn
    </div>
  </div>
);

const App = () => {
  return (
    <div className="relative w-[2160px] h-[1395px] overflow-hidden bg-black flex flex-col [font-family:'Liberation_Sans','Noto_Sans_CJK_SC',sans-serif]">
      <TitleBar />
      <div className="h-[1325px] flex">
        <div className="w-[1787px] flex flex-col">
          <Toolbar />
          <div className="relative h-[700px] border-b-2 border-[#a80000]">
            <PriceChart />
            <div className="absolute left-[4px] top-[3px] h-[24px] flex items-center text-[17px] text-[#bdbdbd] whitespace-nowrap leading-none tracking-[0.25px]">
              <span className="w-[131px]">铁流股份 (日线)</span>
              <span className="w-[22px] flex"><ChevronDot /></span>
              <span className="w-[161px]">圣灵石之火烧</span>
              <span className="w-[129px] text-[#e8e800] tracking-[0.5px]">圣灵石1: 11.87</span>
              <span className="w-[171px] text-[#f01010] tracking-[0.4px]">持股: - 红旗营: 0.00</span>
              <span className="w-[142px] text-[#e8e800]">圣灵石指标: 0.00</span>
              <span>: 0.00</span>
            </div>
          </div>
          <div className="relative h-[517px] border-b-2 border-[#a80000]">
            <VolumeChart />
            <div className="absolute left-[3px] top-[3px] h-[20px] flex items-center gap-[6px] text-[17px] text-[#bdbdbd] whitespace-pre leading-none tracking-[0.3px]">
              <ChevronDot />
              <span className="w-[256px]">VOLUME: 0.00  MA5: 20678.17</span>
              <span className="text-[#e8e800]">MA10: 47158.09</span>
            </div>
          </div>
          <DateAxis />
          <div className="h-[26px] flex border-y-2 border-[#a80000]">
            {tabs1.map((t) => (
              <TabCell key={t.label} label={t.label} w={t.w} />
            ))}
            <div className="w-[711px] border-r border-[#a80000]" />
            <div className="w-[44px] border-r border-[#a80000] flex items-center justify-center text-[15px] text-[#c0c0c0] overflow-hidden">满版</div>
            <div className="w-[38px] border-r border-[#a80000]" />
          </div>
          <div className="h-[27px] flex border-b-2 border-[#a80000]">
            {tabs2.map((t) => (
              <TabCell key={t.label} label={t.label} w={t.w} />
            ))}
          </div>
        </div>
        <QuotePanel />
        <SideBar />
      </div>
      <StatusBar />
      <Watermark />
    </div>
  );
};

export default App;
